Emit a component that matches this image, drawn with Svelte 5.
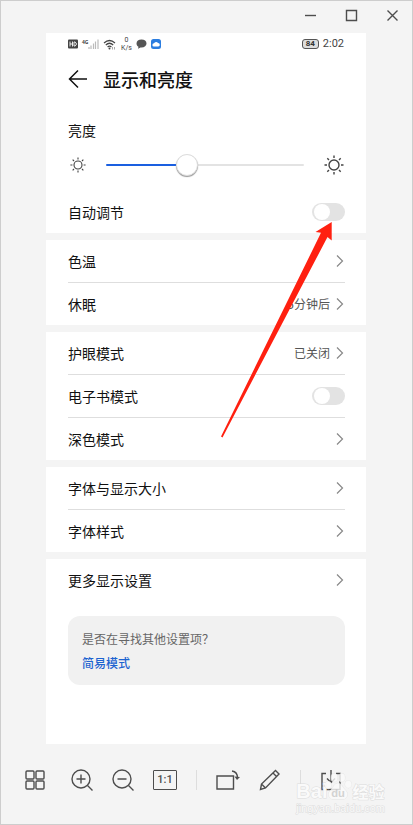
<script>
  let brightness = $state(40);
  let auto = $state(false);
  let ebook = $state(false);
</script>

{#snippet chevron()}
  <svg class="chev" width="8" height="14" viewBox="0 0 8 14"><path d="M1 1.5 L6.500 7 L1 12.5" /></svg>
{/snippet}

{#snippet sun(size)}
  <svg class="sun" width={size} height={size} viewBox="0 0 20 20">
    <circle cx="10" cy="10" r="5" />
    <path d="M10 .5v2.500M10 17v2.500M.5 10H3M17 10h2.500M3.300 3.300l1.700 1.700M15 15l1.700 1.700M3.300 16.700l1.700-1.700M15 5l1.700-1.700" />
  </svg>
{/snippet}

<div class="window">
  <header class="titlebar">
    <button aria-label="最小化"><svg width="13" height="13" viewBox="0 0 13 13"><path d="M1 6.500h11" /></svg></button>
    <button aria-label="最大化"><svg width="13" height="13" viewBox="0 0 13 13"><path d="M1.500 1.500h10v10h-10z" /></svg></button>
    <button aria-label="关闭"><svg width="13" height="13" viewBox="0 0 13 13"><path d="M1.500 1.500l10 10M11.500 1.500l-10 10" /></svg></button>
  </header>

  <main class="phone">
    <div class="status">
      <svg width="10" height="10" viewBox="0 0 10 10"><rect y=".5" width="10" height="9" rx="1" fill="#444" /><path d="M2 2.500v5M4.500 2.500v5M2 5h2.500M6 3h1l1.200 1v2L7 7H6z" fill="none" stroke="#fff" stroke-width=".9" /></svg>
      <div class="signal">
        <span>4G</span>
        <svg width="11" height="10" viewBox="0 0 11 10"><path d="M1 8v2M3 6.500V10M5.500 4.500V10M7.500 2.500V10M10 .5V10" fill="none" stroke="#bbb" stroke-width="1.200" /></svg>
      </div>
      <svg width="13" height="11" viewBox="0 0 13 11"><path d="M1 4Q6.500-1 12 4M2.800 6Q6.500 2.500 10.200 6M4.600 8Q6.500 6.200 8.400 8" fill="none" stroke="#444" stroke-width="1.200" /><circle cx="6.500" cy="9.500" r="1" fill="#444" /><path d="M9.500 8v2.500M11.500 8v2.500" stroke="#aaa" /></svg>
      <div class="speed"><span>0</span><span>K/s</span></div>
      <svg width="11" height="10" viewBox="0 0 11 10"><path d="M5.500.5C2.500.5.5 2 .5 4.500c0 1.500.8 2.600 2 3.200L2 9.700l2.500-1.300h1c3 0 5-1.500 5-3.900S8.500.5 5.500.5z" fill="#555" /></svg>
      <svg width="10" height="10" viewBox="0 0 10 10"><rect width="10" height="10" rx="2.500" fill="#2b7de0" /><path d="M3 7.500a1.600 1.600 0 0 1 0-3.200A2.200 2.200 0 0 1 7 4.100a1.700 1.700 0 0 1 .2 3.400z" fill="#fff" /></svg>
      <div class="battery">84</div>
      <time>2:02</time>
    </div>

    <div class="head">
      <button aria-label="返回"><svg width="20" height="20" viewBox="0 0 20 20"><path d="M10 1.500L1.500 10l8.500 8.500M1.500 10H19" /></svg></button>
      <h1>显示和亮度</h1>
    </div>

    <section class="bright">
      <label for="brightness">亮度</label>
      <div class="slider">
        {@render sun(16)}
        <input id="brightness" type="range" min="0" max="100" bind:value={brightness} style="--fill: {brightness}%" />
        {@render sun(20)}
      </div>
      <label class="row">自动调节<input class="switch" type="checkbox" role="switch" bind:checked={auto} /></label>
    </section>

    <section class="group">
      <button class="row">色温{@render chevron()}</button>
      <button class="row">休眠<span class="value">5分钟后</span>{@render chevron()}</button>
    </section>
    <section class="group">
      <button class="row">护眼模式<span class="value">已关闭</span>{@render chevron()}</button>
      <label class="row">电子书模式<input class="switch" type="checkbox" role="switch" bind:checked={ebook} /></label>
      <button class="row">深色模式{@render chevron()}</button>
    </section>
    <section class="group">
      <button class="row">字体与显示大小{@render chevron()}</button>
      <button class="row">字体样式{@render chevron()}</button>
    </section>
    <section class="group">
      <button class="row">更多显示设置{@render chevron()}</button>
    </section>

    <aside class="tip">
      <p>是否在寻找其他设置项？</p>
      <a href="#simple">简易模式</a>
    </aside>

    <svg class="pointer" width="111" height="216" viewBox="221 222 111 216"><path d="M331.700 222L315.500 232L321 232.800L221 436.500L222.500 437.500L327.500 237L331.700 240.500z" fill="#ff2010" /></svg>
  </main>

  <footer class="toolbar">
    <button class="grid" aria-label="缩略图"><svg width="20" height="20" viewBox="0 0 20 20"><rect x="1" y="1" width="8" height="8" rx="1" /><rect x="11" y="1" width="8" height="8" rx="1" /><rect x="1" y="11" width="8" height="8" rx="1" /><rect x="11" y="11" width="8" height="8" rx="1" /></svg></button>
    <button aria-label="放大"><svg width="22" height="22" viewBox="0 0 22 22"><circle cx="10" cy="10" r="9" /><path d="M16.500 16.500l5 5M5.500 10h9M10 5.500v9" /></svg></button>
    <button aria-label="缩小"><svg width="22" height="22" viewBox="0 0 22 22"><circle cx="10" cy="10" r="9" /><path d="M16.500 16.500l5 5M5.500 10h9" /></svg></button>
    <button class="ratio">1:1</button>
    <i></i>
    <button aria-label="旋转"><svg width="24" height="22" viewBox="0 0 24 22"><path d="M1 7h16.500v13H1zM16 2c3.500.5 5.500 3.500 5.500 7" /><path d="M18.500 7.500l5.500.5-3 3z" fill="#4d4d4d" stroke="none" /></svg></button>
    <button aria-label="编辑"><svg width="22" height="22" viewBox="0 0 22 22"><path d="M1.500 20.500l1-5.500L16.500 1.500l3.500 3.500L6.500 19zM2.500 15L6.500 19M14 4l3.500 3.500" /></svg></button>
    <i></i>
    <button aria-label="保存"><svg width="22" height="22" viewBox="0 0 22 22"><path d="M6 4.500H2v16h18v-16H16M11 1v12M7 9.500l4 4 4-4" /></svg></button>
  </footer>

  <div class="watermark">
    <div class="brand">
      <span>Bai</span>
      <svg width="28" height="29" viewBox="0 0 30 29"><ellipse cx="4.500" cy="13" rx="3.500" ry="4" /><ellipse cx="11" cy="5" rx="3.500" ry="4.500" /><ellipse cx="19" cy="5" rx="3.500" ry="4.500" /><ellipse cx="26" cy="12" rx="3.500" ry="4" /><path d="M15 11c-4 0-5 5-8.500 8-3 3-1.500 9 3 9h11c4.500 0 6-6 3-9-3.500-3-4.500-8-8.500-8z" /><text x="15" y="26" text-anchor="middle">du</text></svg>
      <b>经验</b>
    </div>
    <small>jingyan.baidu.com</small>
  </div>
</div>

<style>
  :global(body) { margin: 0; background: #f4f4f4; }
  .window {
    position: relative;
    box-sizing: border-box;
    min-height: 100vh;
    display: flex;
    flex-direction: column;
    border: 1px solid #cdcdcd;
    background: #f4f4f4;
    font-family: "Noto Sans CJK SC", sans-serif;
  }
  button { border: 0; padding: 0; margin: 0; background: none; font: inherit; color: inherit; display: flex; align-items: center; }
  .titlebar { height: 32px; display: flex; justify-content: flex-end; align-items: center; gap: 28px; padding: 0 13px 3px; box-sizing: border-box; }
  .titlebar svg, .toolbar svg { fill: none; stroke: #4d4d4d; stroke-width: 1.400; }
  .phone { position: relative; flex: 1; margin: 0 46px 0 45px; background: #fff; color: #111; font-size: 14px; line-height: 20px; }
  .status { display: flex; align-items: center; height: 22px; padding: 0 22px; gap: 4px; }
  .status svg { flex: none; }
  .signal { display: flex; align-items: flex-end; }
  .signal span { align-self: flex-start; font: 700 5px/6px "Noto Sans", sans-serif; color: #444; }
  .speed { display: flex; flex-direction: column; align-items: center; width: 12px; font: 7px/8px Roboto, sans-serif; color: #444; }
  .battery { margin-left: auto; width: 15px; height: 8px; border: 1px solid #555; border-radius: 3px; background: #ddd; font: 700 8px/8px Roboto, sans-serif; text-align: center; color: #333; }
  time { font: 11px/14px Roboto, sans-serif; color: #444; }
  .head { display: flex; align-items: center; gap: 15px; height: 48px; padding: 0 22px; }
  .head svg { fill: none; stroke: #111; stroke-width: 1.500; }
  h1 { margin: 0; font-size: 18px; line-height: 26px; font-weight: 500; }
  .bright { padding-top: 17px; }
  .bright > label:first-child { display: block; padding: 0 22px; }
  .slider { display: flex; align-items: center; gap: 20px; height: 50px; padding: 0 22px 0 24px; }
  .sun { flex: none; fill: none; stroke: #444; stroke-width: 1.400; }
  .slider input { flex: 1; min-width: 0; height: 22px; margin: 0; appearance: none; background: none; }
  .slider input::-webkit-slider-runnable-track { height: 2px; border-radius: 1px; background: linear-gradient(to right, #1a5fe0 var(--fill), #e3e3e3 var(--fill)); }
  .slider input::-webkit-slider-thumb { appearance: none; width: 22px; height: 22px; margin-top: -10px; border-radius: 50%; background: #fff; border: 1px solid #ddd; box-shadow: 0 1px 1px #999; box-sizing: border-box; }
  .row { box-sizing: border-box; width: 100%; height: 42px; padding: 0 21px 0 22px; display: flex; align-items: center; text-align: left; }
  .bright .row { height: 43px; }
  .row > :global(:first-child) { margin-left: auto; }
  .group { border-top: 7px solid #f4f4f4; }
  .group .row + .row { height: 43px; background: linear-gradient(#dedede, #dedede) 22px 0 / calc(100% - 43px) 1px no-repeat; }
  .value { font-size: 12px; color: #555; }
  .chev { margin: 0 1px 0 6px; fill: none; stroke: #888; stroke-width: 1.200; }
  .switch { appearance: none; position: relative; width: 33px; height: 18px; margin: 0; border-radius: 9px; background: #e3e3e3; }
  .switch::before { content: ""; position: absolute; left: 2px; top: 1px; width: 16px; height: 16px; border-radius: 50%; background: #fff; }
  .switch:checked { background: #1a5fe0; }
  .switch:checked::before { left: 15px; }
  .tip { margin: 15px 21px 0 22px; padding: 14px 14px 13px; border-radius: 12px; background: #f1f1f1; font-size: 12px; line-height: 18px; color: #666; }
  .tip p { margin: 0 0 6px; }
  .tip a { display: block; color: #1d63d0; font-weight: 500; text-decoration: none; }
  .pointer { position: absolute; left: 175px; top: 189px; pointer-events: none; }
  .toolbar { height: 80px; padding: 0 24px 8px; box-sizing: border-box; display: flex; align-items: center; gap: 19px; }
  .toolbar .grid { margin-right: 7px; }
  .toolbar i { width: 1px; height: 20px; background: #ddd; }
  .ratio { width: 24px; height: 20px; box-sizing: border-box; border: 1px solid #4d4d4d; border-radius: 1px; justify-content: center; font: 500 11px/16px Roboto, sans-serif; color: #4d4d4d; }
  .watermark { position: absolute; right: 27px; bottom: 9px; pointer-events: none; color: #fafafa; -webkit-text-stroke: 1px #dcdcdc; paint-order: stroke fill; }
  .brand { display: flex; align-items: flex-end; height: 29px; }
  .brand span { font: 700 20px/20px "Liberation Sans", sans-serif; }
  .brand svg { fill: #fafafa; fill-opacity: .8; stroke: #dcdcdc; stroke-width: .6; margin-left: -3px; }
  .brand text { font: 700 12px "Liberation Sans", sans-serif; fill: #c8c8c8; stroke: none; -webkit-text-stroke: 0; }
  .brand b { font-size: 16px; line-height: 20px; }
  small { display: block; font: 11px/14px "Liberation Sans", sans-serif; }
</style>
